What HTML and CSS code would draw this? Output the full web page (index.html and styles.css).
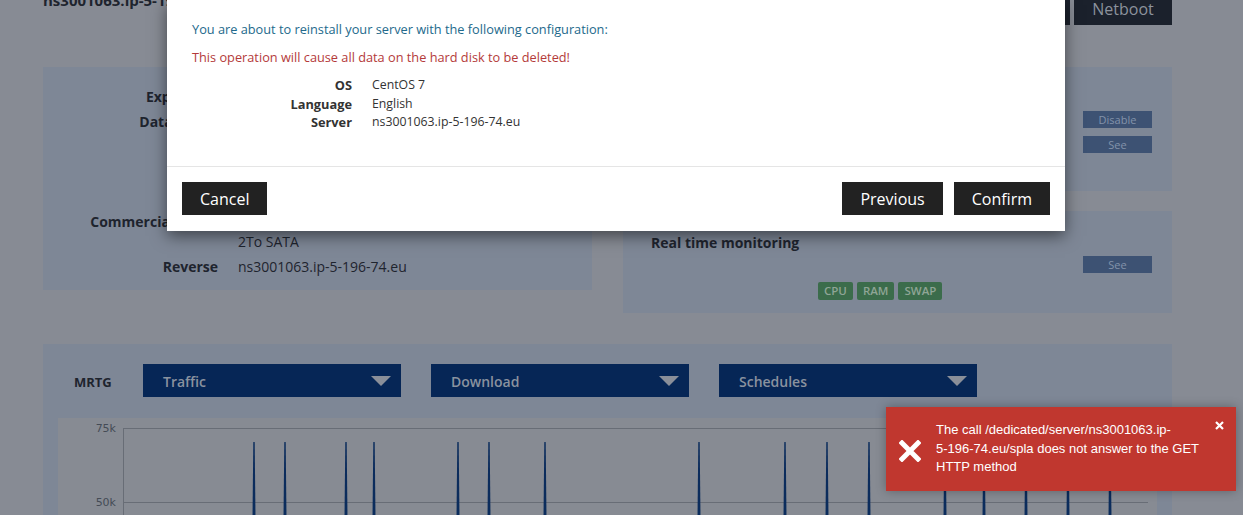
FILE: index.html
```html
<!DOCTYPE html>
<html lang="en">
<head>
<meta charset="utf-8">
<title>Server</title>
<link rel="stylesheet" href="styles.css">
</head>
<body>
<div class="page">
  <header class="top">
    <h1 class="title">ns3001063.ip-5-196-74.eu</h1>
    <div class="actions">
      <button class="dark-btn">Reinstall</button>
      <button class="dark-btn">Netboot</button>
    </div>
  </header>

  <section class="info-grid">
    <div class="panel left-panel">
      <div class="row"><span class="lbl">Expiration</span><span class="val">24/04/2015</span></div>
      <div class="row"><span class="lbl">Datacenter</span><span class="val">Roubaix 6</span></div>
      <div class="row"><span class="lbl">OS</span><span class="val">CentOS 7</span></div>
      <div class="row"><span class="lbl">Boot</span><span class="val">Hard disk</span></div>
      <div class="row"><span class="lbl">IP</span><span class="val">5.196.74.0</span></div>
      <div class="row"><span class="lbl">Commercial range</span><span class="val">KS-2<br>2To SATA</span></div>
      <div class="row"><span class="lbl">Reverse</span><span class="val">ns3001063.ip-5-196-74.eu</span></div>
    </div>
    <div class="right-col">
      <div class="panel rp1">
        <div class="btn-row"><span class="rlbl">Monitoring</span><button class="small-btn">Disable</button></div>
        <div class="btn-row"><span class="rlbl">Interventions</span><button class="small-btn">See</button></div>
      </div>
      <div class="panel rp2">
        <div class="rt-title">Real time monitoring</div>
        <div class="btn-row"><button class="small-btn">See</button></div>
        <div class="badges">
          <span class="badge">CPU</span><span class="badge">RAM</span><span class="badge">SWAP</span>
        </div>
      </div>
    </div>
  </section>

  <section class="panel mrtg">
    <div class="mrtg-head">
      <span class="mrtg-label">MRTG</span>
      <div class="select"><span>Traffic</span><i class="tri"></i></div>
      <div class="select"><span>Download</span><i class="tri"></i></div>
      <div class="select"><span>Schedules</span><i class="tri"></i></div>
    </div>
    <div class="chart">
      <svg class="chart-svg" width="1100" height="110" viewBox="0 0 1100 110">
        <text class="axis" x="58" y="14" text-anchor="end">75k</text>
        <text class="axis" x="58" y="88" text-anchor="end">50k</text>
        <line class="grid" x1="65" y1="10.5" x2="1090" y2="10.5"/>
        <line class="grid" x1="65" y1="84.5" x2="1090" y2="84.5"/>
        <line class="grid" x1="65.5" y1="10" x2="65.5" y2="110"/>
        <g class="spikes">
          <polygon points="195.3,24 196.7,24 197.6,110 194.4,110"/>
          <polygon points="226.3,24 227.7,24 228.6,110 225.4,110"/>
          <polygon points="287.3,24 288.7,24 289.6,110 286.4,110"/>
          <polygon points="315.3,24 316.7,24 317.6,110 314.4,110"/>
          <polygon points="399.3,24 400.7,24 401.6,110 398.4,110"/>
          <polygon points="430.3,24 431.7,24 432.6,110 429.4,110"/>
          <polygon points="486.3,24 487.7,24 488.6,110 485.4,110"/>
          <polygon points="640.3,24 641.7,24 642.6,110 639.4,110"/>
          <polygon points="726.3,24 727.7,24 728.6,110 725.4,110"/>
          <polygon points="768.3,24 769.7,24 770.6,110 767.4,110"/>
          <polygon points="810.3,24 811.7,24 812.6,110 809.4,110"/>
          <polygon points="886.3,24 887.7,24 888.6,110 885.4,110"/>
          <polygon points="925.3,24 926.7,24 927.6,110 924.4,110"/>
          <polygon points="967.3,24 968.7,24 969.6,110 966.4,110"/>
          <polygon points="1009.3,24 1010.7,24 1011.6,110 1008.4,110"/>
          <polygon points="1051.3,24 1052.7,24 1053.6,110 1050.4,110"/>
        </g>
      </svg>
    </div>
  </section>
</div>

<div class="modal">
  <div class="modal-body">
    <p class="intro">You are about to reinstall your server with the following configuration:</p>
    <p class="warn">This operation will cause all data on the hard disk to be deleted!</p>
    <div class="conf">
      <span class="ck">OS</span><span class="cv">CentOS 7</span>
      <span class="ck">Language</span><span class="cv">English</span>
      <span class="ck">Server</span><span class="cv">ns3001063.ip-5-196-74.eu</span>
    </div>
  </div>
  <div class="modal-foot">
    <button class="mbtn">Cancel</button>
    <div class="foot-right">
      <button class="mbtn">Previous</button>
      <button class="mbtn">Confirm</button>
    </div>
  </div>
</div>

<div class="toast">
  <svg class="toast-icon" width="22" height="22" viewBox="0 0 22 22"><path d="M3 3 L19 19 M19 3 L3 19" stroke="#fff" stroke-width="5" stroke-linecap="square"/></svg>
  <p class="toast-text">The call /dedicated/server/ns3001063.ip-<br>5-196-74.eu/spla does not answer to the GET<br>HTTP method</p>
  <svg class="toast-close" width="9" height="9" viewBox="0 0 9 9"><path d="M1 1 L8 8 M8 1 L1 8" stroke="#fff" stroke-width="2.2"/></svg>
</div>
</body>
</html>
```

FILE: styles.css
```css
* { box-sizing: border-box; }
html, body { margin: 0; padding: 0; }
body {
  background: #878b94;
  font-family: "Open Sans", "Noto Sans", sans-serif;
  color: #1e242e;
  width: 1243px;
  height: 515px;
  overflow: hidden;
  position: relative;
}
button { font-family: inherit; border: 0; cursor: pointer; }

.page { padding: 0 71px 0 43px; }

.top {
  display: flex;
  justify-content: space-between;
  align-items: flex-start;
  margin-top: -8px;
  height: 33px;
}
.title {
  margin: -2px 0 0;
  font-size: 15px;
  line-height: 20px;
  font-weight: 700;
  color: #1e242e;
}
.actions { display: flex; gap: 4px; }
.dark-btn {
  background: #1b212c;
  color: #8c929c;
  font-size: 16px;
  height: 33px;
  width: 98px;
  padding: 0;
}

.info-grid {
  margin-top: 42px;
  display: grid;
  grid-template-columns: 549px 549px;
  column-gap: 31px;
  align-items: start;
}
.panel { background: #7e8796; }

.left-panel {
  padding: 20px 0 13px;
  display: flex;
  flex-direction: column;
  gap: 5px;
  font-size: 14px;
}
.row { display: flex; line-height: 20px; }
.lbl { width: 175px; text-align: right; font-weight: 700; flex: none; }
.val { margin-left: 20px; }

.right-col { display: flex; flex-direction: column; gap: 20px; }
.rp1 {
  height: 124px;
  padding: 44px 20px 0 28px;
  display: flex;
  flex-direction: column;
  gap: 8px;
}
.btn-row { display: flex; justify-content: space-between; align-items: center; height: 17px; }
.btn-row .small-btn:only-child { margin-left: auto; }
.rlbl { font-size: 14px; font-weight: 700; }
.small-btn {
  background: #3d5273;
  color: #8393aa;
  font-size: 11px;
  width: 69px;
  height: 17px;
  padding: 0;
}
.rp2 {
  height: 102px;
  padding: 22px 20px 0 28px;
}
.rt-title { font-size: 14px; font-weight: 700; line-height: 20px; margin-bottom: 3px; }
.badges { display: flex; gap: 4px; margin: 9px 0 0 167px; }
.badge {
  background: #3b6c4b;
  color: #8fa596;
  font-size: 11.5px;
  font-weight: 600;
  height: 18px;
  line-height: 18px;
  padding: 0 6px;
  border-radius: 2px;
}

.mrtg {
  margin-top: 31px;
  height: 200px;
  padding: 20px 15px 0;
}
.mrtg-head { display: flex; align-items: center; gap: 30px; padding-left: 16px; }
.mrtg-label { font-size: 13px; font-weight: 700; width: 39px; padding-top: 2px; }
.select {
  width: 258px;
  height: 33px;
  background: #062656;
  color: #8a929f;
  font-size: 14px;
  font-weight: 600;
  display: flex;
  align-items: center;
  justify-content: space-between;
  padding: 2px 10px 0 20px;
}
.tri {
  width: 0; height: 0;
  margin-top: -1px;
  border-left: 10px solid transparent;
  border-right: 10px solid transparent;
  border-top: 10px solid #8a8f99;
}
.chart {
  margin-top: 21px;
  background: #878b93;
  height: 120px;
}
.chart-svg { display: block; }
.axis { font-family: "DejaVu Sans", sans-serif; font-size: 11px; fill: #454b56; }
.grid { stroke: #686d76; stroke-width: 1; }
.spikes polygon { fill: #0b2c5c; }

.modal {
  position: absolute;
  left: 167px;
  top: 0;
  width: 898px;
  height: 231px;
  background: #fff;
  box-shadow: 0 5px 15px rgba(0,0,0,0.5);
  font-size: 12.3px;
}
.modal-body { padding: 20px 25px 0; height: 166px; }
.modal-body p { margin: 0; line-height: 18px; font-size: 12.75px; }
.intro { color: #22698b; }
.warn { color: #b43a3a; margin-top: 10px !important; }
.conf {
  margin-top: 10px;
  display: grid;
  grid-template-columns: 160px auto;
  column-gap: 20px;
  line-height: 18.5px;
  color: #333;
}
.ck { text-align: right; font-weight: 700; font-size: 12.8px; }
.modal-foot {
  border-top: 1px solid #e5e5e5;
  padding: 15px 15px 16px;
  display: flex;
  justify-content: space-between;
}
.foot-right { display: flex; gap: 11px; }
.mbtn {
  background: #222;
  color: #fff;
  font-size: 16px;
  height: 33px;
  padding: 0 18px;
}

.toast {
  position: absolute;
  left: 886px;
  top: 407px;
  width: 350px;
  height: 84px;
  background: #c0372f;
  box-shadow: 0 0 10px rgba(0,0,0,0.3);
  display: flex;
  align-items: flex-start;
  padding: 14px 0 0 13px;
}
.toast-icon { margin-top: 19px; flex: none; }
.toast-text {
  margin: 0 0 0 15px;
  font-family: "Liberation Sans", Arial, sans-serif;
  font-size: 13px;
  line-height: 18.5px;
  color: #fff;
  width: 270px;
}
.toast-close { position: absolute; right: 12px; top: 14px; }
```
